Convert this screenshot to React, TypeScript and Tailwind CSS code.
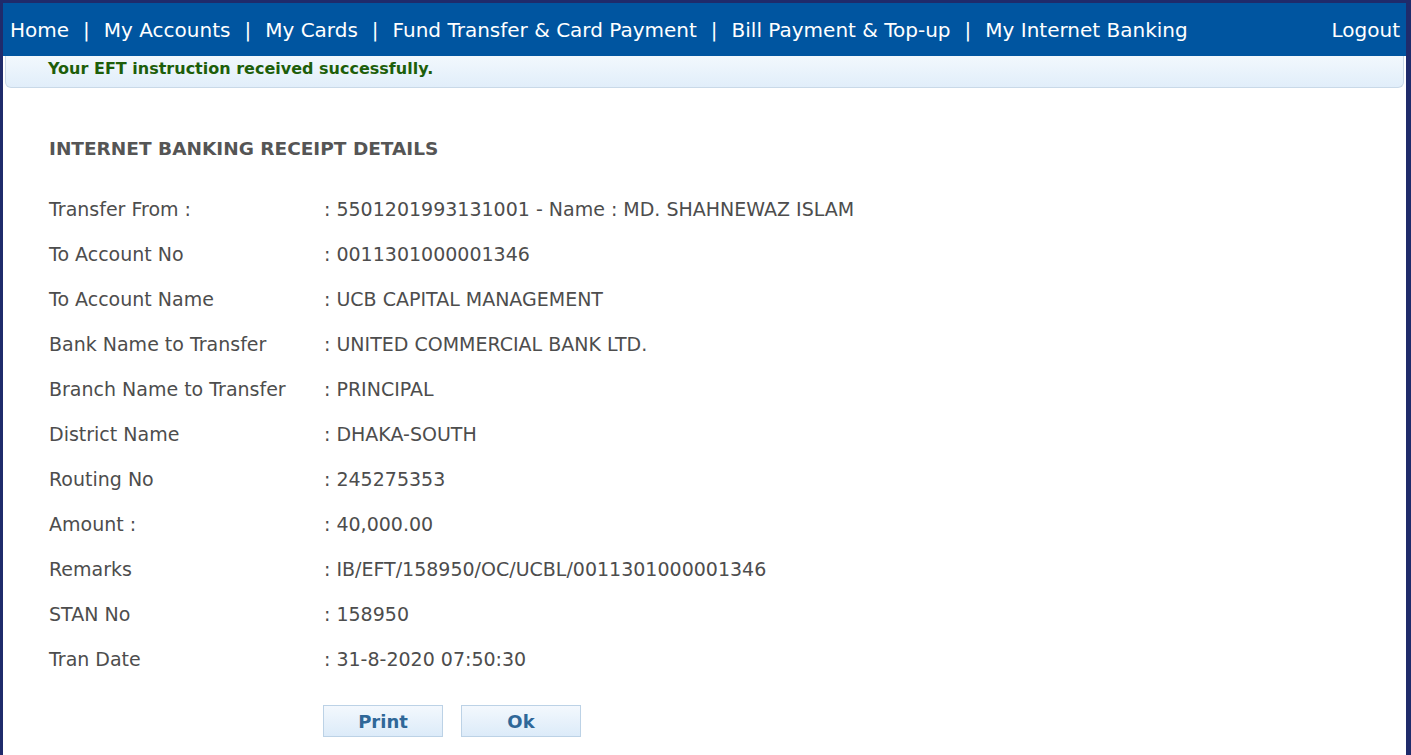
import React from 'react';

const navItems = ['Home', 'My Accounts', 'My Cards', 'Fund Transfer & Card Payment', 'Bill Payment & Top-up', 'My Internet Banking'];

const rows: [string, string][] = [
	['Transfer From :', ': 5501201993131001 - Name : MD. SHAHNEWAZ ISLAM'],
	['To Account No', ': 0011301000001346'],
	['To Account Name', ': UCB CAPITAL MANAGEMENT'],
	['Bank Name to Transfer', ': UNITED COMMERCIAL BANK LTD.'],
	['Branch Name to Transfer', ': PRINCIPAL'],
	['District Name', ': DHAKA-SOUTH'],
	['Routing No', ': 245275353'],
	['Amount :', ': 40,000.00'],
	['Remarks', ': IB/EFT/158950/OC/UCBL/0011301000001346'],
	['STAN No', ': 158950'],
	['Tran Date', ': 31-8-2020 07:50:30'],
];

export default function App() {
	return (
		<div className="w-[1411px] h-[755px] overflow-hidden bg-[#1f2b6b] pl-[3px] pr-[5px] pt-[3px] font-['DejaVu_Sans',sans-serif]">
			<div className="flex h-full flex-col bg-white">
				<nav className="flex h-[53px] items-center justify-between bg-[#0055a0] pl-[7px] pr-[6px] text-[20px] text-white">
					<div className="flex items-center">
						{navItems.map((item, i) => (
							<React.Fragment key={item}>
								{i > 0 && <span className="px-[14px]">|</span>}
								<span>{item}</span>
							</React.Fragment>
						))}
					</div>
					<span>Logout</span>
				</nav>
				<div className="mx-[2px] h-[32px] rounded-b-[6px] border border-t-0 border-[#c9d9e8] bg-gradient-to-b from-[#f2f8fd] to-[#e1eefa] pl-[42px] pt-px text-[16px] font-bold text-[#1d5e0a]">
					Your EFT instruction received successfully.
				</div>
				<main className="pl-[46px] pt-[49px] text-[19px] text-[#4d4d4d]">
					<h2 className="mb-[26px] text-[18.5px] font-bold leading-[24px] text-[#555]">INTERNET BANKING RECEIPT DETAILS</h2>
					<div className="flex flex-col">
						{rows.map(([label, value]) => (
							<div key={label} className="flex h-[45px] items-center">
								<div className="w-[275px]">{label}</div>
								<div>{value}</div>
							</div>
						))}
					</div>
					<div className="ml-[274px] mt-[23px] flex gap-[18px]">
						<button className="h-[32px] w-[120px] border border-[#bcd2e6] bg-gradient-to-b from-[#f3f8fd] to-[#dcebf9] text-[18px] font-bold text-[#2f6798]">Print</button>
						<button className="h-[32px] w-[120px] border border-[#bcd2e6] bg-gradient-to-b from-[#f3f8fd] to-[#dcebf9] text-[18px] font-bold text-[#2f6798]">Ok</button>
					</div>
				</main>
			</div>
		</div>
	);
}
